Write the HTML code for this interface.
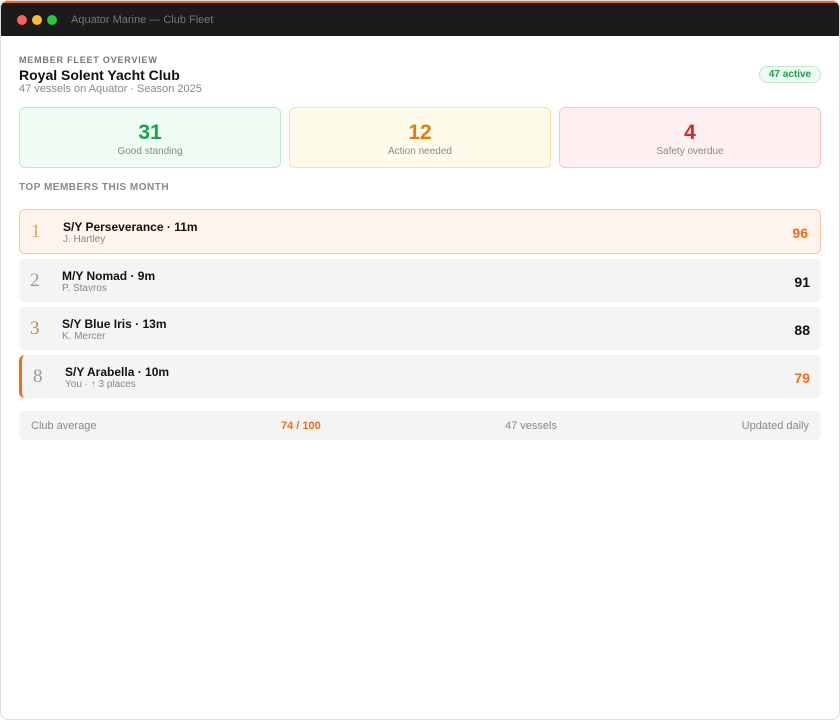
<!DOCTYPE html>
<html><head><style>
*{box-sizing:border-box;margin:0;padding:0}
body{width:840px;height:720px;background:#fff;font-family:"Liberation Sans",sans-serif;position:relative;overflow:hidden}
.win{position:absolute;left:0;top:0;width:840px;height:720px;border-radius:8px;overflow:hidden;background:#fff}
.frame{position:absolute;left:0;top:0;width:840px;height:720px;border:1px solid #ddd;border-radius:8px;pointer-events:none}
.top{position:absolute;left:0;top:0;width:100%;height:3px;background:#f26a12}
.bar{position:absolute;left:0;top:3px;width:100%;height:33px;background:#1b1b1b}
.dot{position:absolute;top:12px;width:10px;height:10px;border-radius:50%}
.bt{position:absolute;left:71px;top:11px;font-size:11px;color:#777}
.abs{position:absolute}
.lbl{left:19px;top:55px;font-size:9px;font-weight:bold;letter-spacing:.8px;color:#777}
.h1{left:19px;top:67px;font-size:14px;font-weight:bold;color:#111}
.sub{left:19px;top:83px;font-size:11px;color:#888}
.pill{left:759px;top:66px;width:62px;height:17px;border:1px solid #bfe8cc;background:#eefbf2;color:#1f9d4c;border-radius:9px;font-size:10px;font-weight:bold;text-align:center;line-height:16px}
.card{top:107px;width:262px;height:61px;border-radius:6px;border:1px solid;text-align:center}
.card b{display:block;font-size:21px;margin-top:13px;line-height:24px}
.card span{display:block;font-size:10px;color:#888;margin-top:1px}
.sec{left:19px;top:182px;font-size:10px;font-weight:bold;letter-spacing:.5px;color:#888}
.row{left:19px;width:802px;border-radius:6px;background:#f4f4f4}
.rk{position:absolute;left:11px;font-family:"Liberation Serif",serif;font-size:19px;color:#999}
.nm{position:absolute;left:42px;font-size:12px;font-weight:bold;color:#111}
.ow{position:absolute;left:42px;font-size:10px;color:#888}
.sc{position:absolute;right:11px;font-size:14px;font-weight:bold;color:#111}
.foot{left:19px;top:411px;width:802px;height:29px;background:#f4f4f4;border-radius:6px;font-size:11px;color:#888}
.foot span{position:absolute;top:9px}
</style></head><body>
<div class="win">
<div class="top"></div>
<div class="bar">
<div class="dot" style="left:17px;background:#ff5f57"></div>
<div class="dot" style="left:32px;background:#febc2e"></div>
<div class="dot" style="left:47px;background:#28c840"></div>
<div class="bt">Aquator Marine — Club Fleet</div>
</div>
<div class="abs lbl">MEMBER FLEET OVERVIEW</div>
<div class="abs h1">Royal Solent Yacht Club</div>
<div class="abs sub">47 vessels on Aquator · Season 2025</div>
<div class="abs pill">47 active</div>
<div class="abs card" style="left:19px;background:#effcf3;border-color:#b9e9c8"><b style="color:#1fa251">31</b><span>Good standing</span></div>
<div class="abs card" style="left:289px;background:#fffbea;border-color:#f8e59a"><b style="color:#de7d0c">12</b><span>Action needed</span></div>
<div class="abs card" style="left:559px;background:#fff1f1;border-color:#f8c6c6"><b style="color:#dc2626">4</b><span>Safety overdue</span></div>
<div class="abs sec">TOP MEMBERS THIS MONTH</div>

<div class="abs row" style="top:209px;height:45px;background:#fff3ee;border:1px solid #fbc6a6">
<div class="rk" style="top:11px;left:11px;color:#d4a94a">1</div>
<div class="nm" style="top:10px;left:43px">S/Y Perseverance · 11m</div>
<div class="ow" style="top:24px;left:43px">J. Hartley</div>
<div class="sc" style="top:15px;right:12px;color:#f26a12">96</div>
</div>
<div class="abs row" style="top:259px;height:43px">
<div class="rk" style="top:11px">2</div>
<div class="nm" style="top:10px;left:43px">M/Y Nomad · 9m</div>
<div class="ow" style="top:24px;left:43px">P. Stavros</div>
<div class="sc" style="top:15px">91</div>
</div>
<div class="abs row" style="top:307px;height:43px">
<div class="rk" style="top:11px;color:#c7864a">3</div>
<div class="nm" style="top:10px;left:43px">S/Y Blue Iris · 13m</div>
<div class="ow" style="top:24px;left:43px">K. Mercer</div>
<div class="sc" style="top:15px">88</div>
</div>
<div class="abs row" style="top:355px;height:43px;border-left:3px solid #f26a12">
<div class="rk" style="top:11px;left:11px">8</div>
<div class="nm" style="top:10px;left:43px">S/Y Arabella · 10m</div>
<div class="ow" style="top:24px;left:43px">You · ↑ 3 places</div>
<div class="sc" style="top:15px;color:#f26a12">79</div>
</div>

<div class="abs foot">
<span style="left:12px">Club average</span>
<span style="left:262px;color:#f26a12;font-weight:bold">74 / 100</span>
<span style="left:486px">47 vessels</span>
<span style="right:12px">Updated daily</span>
</div>
</div>
<div class="frame"></div>
</body></html>
